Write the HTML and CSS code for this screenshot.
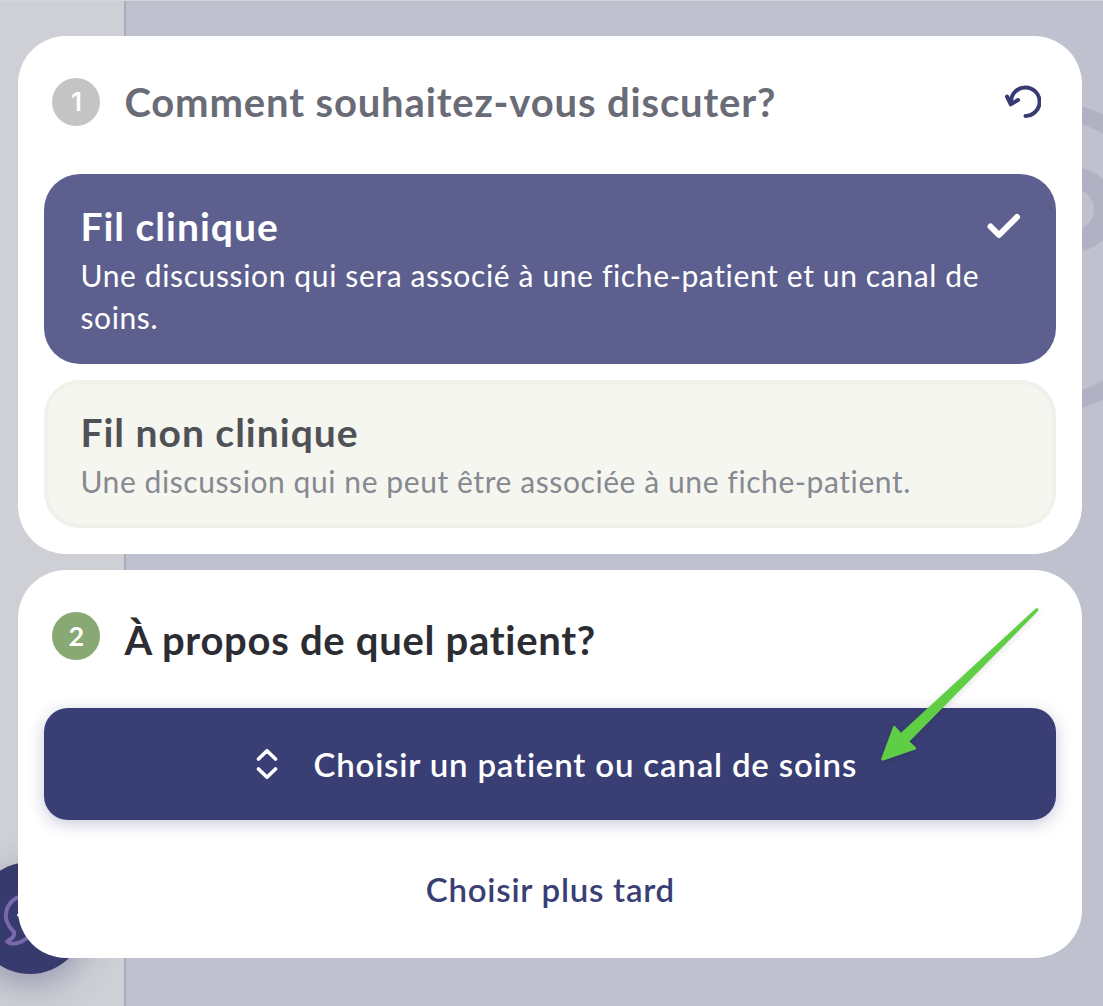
FILE: index.html
```html
<!DOCTYPE html>
<html lang="fr">
<head>
<meta charset="utf-8">
<title>Nouvelle discussion</title>
<link rel="stylesheet" href="styles.css">
</head>
<body>
<div class="backdrop">
  <div class="sidebar"></div>
  <svg class="rings" width="1103" height="1006" viewBox="0 0 1103 1006" fill="none" stroke="#b0b2c3">
    <circle cx="1035" cy="257" r="149.5" stroke-width="17"/>
    <circle cx="1074" cy="209.5" r="31" stroke-width="22"/>
  </svg>
  <div class="fab">
    <svg width="112" height="112" viewBox="0 0 112 112" fill="none" stroke="#7a68ab" stroke-width="4" stroke-linecap="round" stroke-linejoin="round">
      <path d="M50 34C38 35 31 45 32 56C33 62 36 66 40 70C41 75 37 77 33 79.5C38 84 47 81 53 76"/>
      <path d="M44.5 53H50" stroke="#fff" stroke-width="3"/>
    </svg>
  </div>
</div>
<main class="dialog">
  <section class="card card-type">
    <header class="step">
      <span class="badge badge-done"><span class="digit">1</span></span>
      <h2 class="title title-done">Comment souhaitez-vous discuter?</h2>
      <svg class="undo" width="40" height="40" viewBox="0 0 40 40" fill="none" stroke="#363b72" stroke-width="4" stroke-linecap="round" stroke-linejoin="round">
        <path d="M10 20A14.3 14.3 0 1 1 24.5 34"/>
        <path d="M6 14.5L9.8 22.3L17 18" />
      </svg>
    </header>
    <div class="option option-selected">
      <h3 class="option-title">Fil clinique</h3>
      <p class="option-text">Une discussion qui sera associé à une fiche-patient et un canal de<br>soins.</p>
      <svg class="check" width="36" height="30" viewBox="0 0 36 30" fill="none" stroke="#fff" stroke-width="6" stroke-linecap="round" stroke-linejoin="round">
        <path d="M4.5 15.5L13 24L31 6"/>
      </svg>
    </div>
    <div class="option option-plain">
      <h3 class="option-title">Fil non clinique</h3>
      <p class="option-text">Une discussion qui ne peut être associée à une fiche-patient.</p>
    </div>
  </section>
  <section class="card card-patient">
    <header class="step">
      <span class="badge badge-current">2</span>
      <h2 class="title title-current">À propos de quel patient?</h2>
    </header>
    <div class="primary">
      <svg class="sort" width="24" height="34" viewBox="0 0 24 34" fill="none" stroke="#fff" stroke-width="3.6" stroke-linecap="round" stroke-linejoin="round">
        <path d="M3.5 12L12 3.7L20.5 12M3.5 22L12 30.3L20.5 22"/>
      </svg>
      <span class="primary-label">Choisir un patient ou canal de soins</span>
    </div>
    <div class="later"><span class="later-label">Choisir plus tard</span></div>
  </section>
</main>
<svg class="arrow" width="180" height="170" viewBox="870 600 180 170">
  <path d="M1035.8 608.5L901 732.8L895 726Q893.6 725 893 727L881.3 758.5Q880.8 761 883.5 760.5L915.3 749.5Q917 748.5 915.5 747L909.5 741.5L1038 611Q1039.5 607.6 1035.8 608.5Z" fill="#5fce45"/>
</svg>
</body>
</html>
```
FILE: styles.css
```css
* { box-sizing: border-box; }
body {
  margin: 0;
  width: 1103px;
  height: 1006px;
  overflow: hidden;
  position: relative;
  font-family: Lato, "Liberation Sans", sans-serif;
  font-variant-ligatures: none;
  background: #bfc1ce;
}
h2, h3, p { margin: 0; }
svg { display: block; }

.backdrop { position: absolute; inset: 0; overflow: hidden; border-top: 1px solid #d3d4dc; }
.sidebar {
  width: 126px;
  height: 100%;
  background: #cfd0d6;
  border-right: 2px solid #abacb8;
}
.rings { position: absolute; left: 0; top: -1px; }
.fab {
  position: absolute;
  left: -26px;
  top: 861px;
  width: 112px;
  height: 112px;
  border-radius: 50%;
  background: #363a6d;
  box-shadow: 0 10px 34px rgba(54, 58, 109, .38);
}

.dialog {
  position: relative;
  display: flex;
  flex-direction: column;
  gap: 16px;
  padding: 36px 20.6px 48px 18.4px;
}
.card { background: #fff; border-radius: 48px; padding: 0 26px; }
.card-type { height: 518px; }
.card-patient { height: 388px; }

.step { display: flex; align-items: center; height: 138px; padding: 0 15px 6px 8px; }
.badge {
  width: 48px;
  height: 48px;
  flex: none;
  border-radius: 50%;
  display: flex;
  align-items: center;
  justify-content: center;
  color: #fff;
  font-size: 27px;
  line-height: 32px;
  font-weight: 700;
}
.badge-done { background: #c4c4c4; }
.digit { font-family: Inter, sans-serif; font-size: 26px; font-weight: 600; }
.badge-current { background: #88a974; }
.title {
  flex: 1;
  margin-left: 24px;
  font-size: 40px;
  line-height: 48px;
  font-weight: 700;
  white-space: nowrap;
}
.title-done { color: #696c76; letter-spacing: .85px; }
.title-current { color: #2c2d33; letter-spacing: .7px; padding-top: 8px; }

.option { position: relative; border-radius: 36px; padding: 28px 36px; }
.option-selected { height: 190px; background: #5d608f; color: #fff; }
.option-plain {
  height: 148px;
  margin-top: 16px;
  background: #f5f6f0;
  box-shadow: inset 0 0 0 4px #f0f1ea;
  color: #505157;
}
.option-title { font-size: 39px; line-height: 48px; font-weight: 700; letter-spacing: 1px; }
.option-text { font-size: 30px; line-height: 42px; padding-top: 4px; white-space: nowrap; letter-spacing: .63px; }
.option-plain .option-text { color: #868990; letter-spacing: .58px; }
.check { position: absolute; right: 34px; top: 37px; }

.primary {
  height: 112px;
  border-radius: 24px;
  background: #393e75;
  box-shadow: 0 4px 16px rgba(57, 62, 130, .28);
  color: #fff;
  display: flex;
  align-items: center;
  padding-left: 211px;
  gap: 34px;
}
.primary-label, .later-label {
  font-size: 33px;
  line-height: 40px;
  font-weight: 600;
  letter-spacing: .82px;
  white-space: nowrap;
}
.later { display: flex; justify-content: center; padding-top: 49px; color: #393e75; }
.later-label { letter-spacing: .75px; }

.arrow { position: absolute; left: 870px; top: 600px; filter: drop-shadow(0 2px 3px rgba(0, 0, 0, .12)); }
```
